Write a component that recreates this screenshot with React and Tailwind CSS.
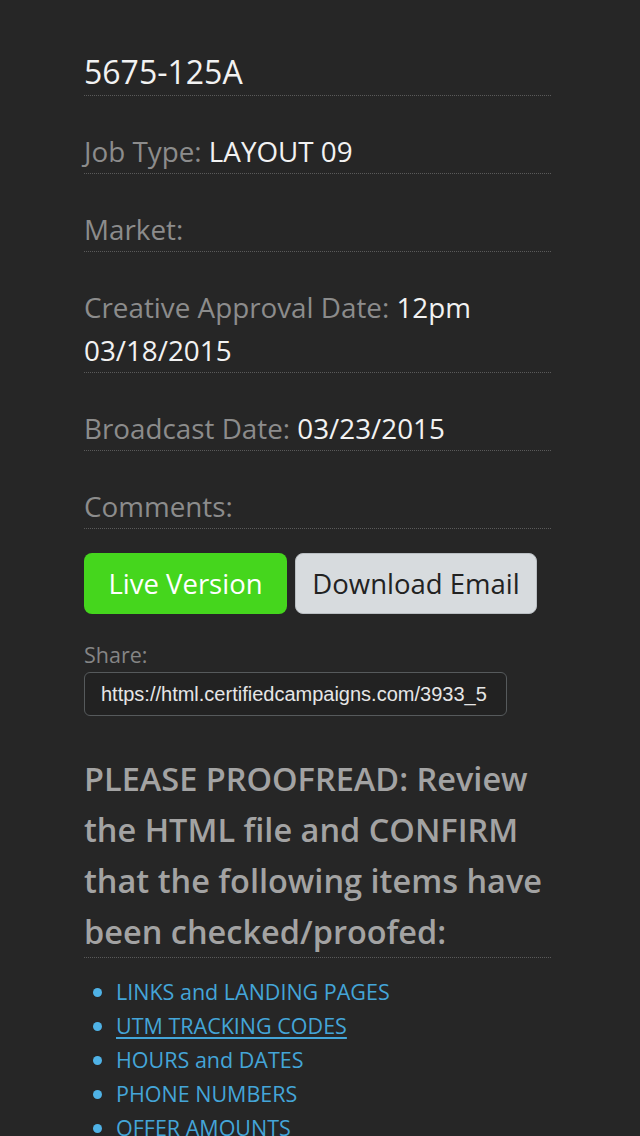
const rows = [
  { label: 'Job Type:', value: 'LAYOUT 09' },
  { label: 'Market:', value: '' },
  { label: 'Creative Approval Date:', value: '12pm 03/18/2015' },
  { label: 'Broadcast Date:', value: '03/23/2015' },
  { label: 'Comments:', value: '' },
]

const checks = [
  { text: 'LINKS and LANDING PAGES' },
  { text: 'UTM TRACKING CODES', underline: true },
  { text: 'HOURS and DATES' },
  { text: 'PHONE NUMBERS' },
  { text: 'OFFER AMOUNTS' },
]

export default function App() {
  return (
    <div
      className="h-[1136px] overflow-hidden bg-[#262626] px-[84px] pt-[50px]"
      style={{ fontFamily: '"Open Sans", "Noto Sans", sans-serif' }}
    >
      <div className="w-[467px]">
        <h1 className="text-[32px] leading-[43px] text-[#f2f2f2] border-b border-dotted border-[#5a5a5a] pb-[2px]">
          5675-125A
        </h1>

        {rows.map(r => (
          <p
            key={r.label}
            className="pt-[34px] text-[27.8px] leading-[43px] border-b border-dotted border-[#5a5a5a]"
          >
            <span className="text-[#8c8c8c]">{r.label}</span>
            {r.value ? <span className="text-[#f2f2f2]">{' ' + r.value}</span> : null}
          </p>
        ))}

        {/* Actions */}
        <div className="flex gap-[8px] mt-[24px]">
          <button className="w-[203px] h-[61px] rounded-[8px] bg-[#45d61d] text-white text-[27.5px]">
            Live Version
          </button>
          <button className="w-[242px] h-[61px] rounded-[8px] bg-[#d7dbde] border border-[#b9bec2] text-[#222] text-[27.5px]">
            Download Email
          </button>
        </div>

        <p className="mt-[28px] text-[21.5px] leading-[26px] text-[#858585]">Share:</p>
        <div className="mt-[4px] w-[423px] h-[44px] rounded-[6px] border border-[#565a5c] bg-[#222] flex items-center px-[16px] overflow-hidden">
          <span
            className="text-[20px] text-[#e6e6e6] whitespace-nowrap"
            style={{ fontFamily: '"Liberation Sans", Arial, sans-serif' }}
          >
            https://html.certifiedcampaigns.com/3933_5
          </span>
        </div>

        <h2 className="mt-[37px] text-[32.5px] leading-[51px] font-semibold text-[#a3a3a3] border-b border-dotted border-[#5a5a5a]">
          PLEASE PROOFREAD: Review the HTML file and CONFIRM that the following items have been checked/proofed:
        </h2>

        <ul className="mt-[17px] pl-[9px]">
          {checks.map(c => (
            <li key={c.text} className="flex items-center text-[21.5px] leading-[34px] text-[#44a5d8]">
              <span className="w-[9px] h-[9px] rounded-full bg-[#4fb2e6] mr-[14px]" />
              <span className={c.underline ? 'underline underline-offset-[3px]' : ''}>{c.text}</span>
            </li>
          ))}
        </ul>
      </div>
    </div>
  )
}
